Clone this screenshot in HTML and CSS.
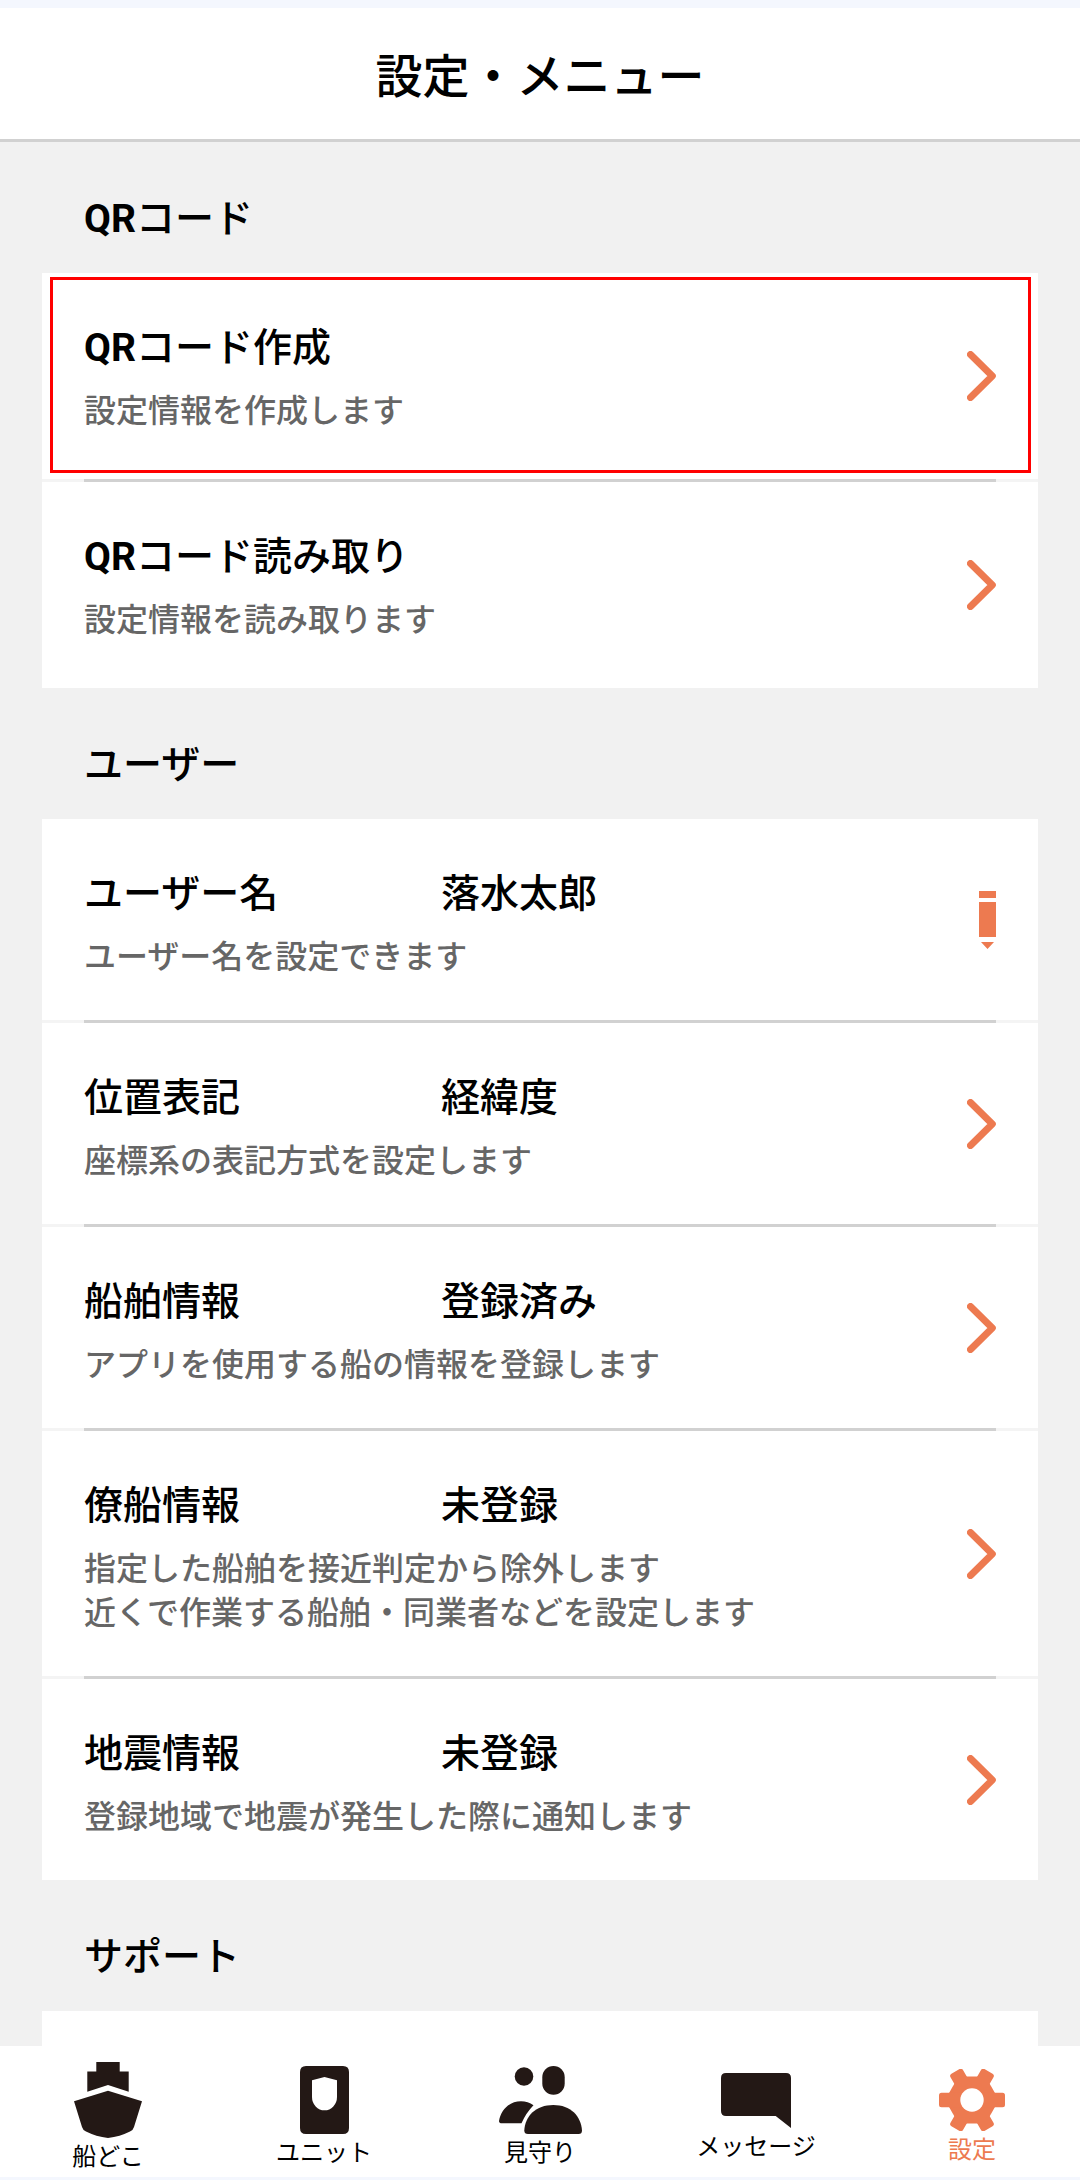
FILE: index.html
```html
<!DOCTYPE html>
<html lang="ja">
<head>
<meta charset="utf-8">
<meta name="viewport" content="width=device-width, initial-scale=1">
<title>設定・メニュー</title>
<link rel="stylesheet" href="styles.css">
</head>
<body>
<svg class="sprite" aria-hidden="true">
  <symbol id="chevron" viewBox="0 0 29 50">
    <path d="M3.5 3.5L25.3 25L3.5 46.5" fill="none" stroke="currentColor" stroke-width="7" stroke-linecap="round" stroke-linejoin="round"/>
  </symbol>
</svg>
<div class="app">
  <header class="header">
    <h1 class="header-title">設定・メニュー</h1>
  </header>

  <main class="main">
    <section class="section">
      <h2 class="section-title"><b>QR</b>コード</h2>
      <ul class="card card-tall">
        <li class="item item-marked">
          <a class="row" href="#qr-create">
            <span class="row-text">
              <span class="row-head"><b>QR</b>コード作成</span>
              <span class="row-desc">設定情報を作成します</span>
            </span>
            <svg class="chevron" aria-hidden="true"><use href="#chevron"/></svg>
          </a>
        </li>
        <li class="item">
          <a class="row" href="#qr-read">
            <span class="row-text">
              <span class="row-head"><b>QR</b>コード読み取り</span>
              <span class="row-desc">設定情報を読み取ります</span>
            </span>
            <svg class="chevron" aria-hidden="true"><use href="#chevron"/></svg>
          </a>
        </li>
      </ul>
    </section>

    <section class="section">
      <h2 class="section-title">ユーザー</h2>
      <ul class="card">
        <li class="item">
          <button class="row" type="button">
            <span class="row-text">
              <span class="row-head"><span class="row-name">ユーザー名</span><span>落水太郎</span></span>
              <span class="row-desc">ユーザー名を設定できます</span>
            </span>
            <svg class="pencil" viewBox="0 0 17 58" aria-hidden="true">
              <path d="M0 0H17V7H0ZM0 11H17V46H0ZM2 51H15L8.500 58Z" fill="currentColor"/>
            </svg>
          </button>
        </li>
        <li class="item">
          <a class="row" href="#position">
            <span class="row-text">
              <span class="row-head"><span class="row-name">位置表記</span><span>経緯度</span></span>
              <span class="row-desc">座標系の表記方式を設定します</span>
            </span>
            <svg class="chevron" aria-hidden="true"><use href="#chevron"/></svg>
          </a>
        </li>
        <li class="item">
          <a class="row" href="#ship">
            <span class="row-text">
              <span class="row-head"><span class="row-name">船舶情報</span><span>登録済み</span></span>
              <span class="row-desc">アプリを使用する船の情報を登録します</span>
            </span>
            <svg class="chevron" aria-hidden="true"><use href="#chevron"/></svg>
          </a>
        </li>
        <li class="item">
          <a class="row" href="#consort">
            <span class="row-text">
              <span class="row-head"><span class="row-name">僚船情報</span><span>未登録</span></span>
              <span class="row-desc">指定した船舶を接近判定から除外します<br>近くで作業する船舶・同業者などを設定します</span>
            </span>
            <svg class="chevron" aria-hidden="true"><use href="#chevron"/></svg>
          </a>
        </li>
        <li class="item">
          <a class="row" href="#earthquake">
            <span class="row-text">
              <span class="row-head"><span class="row-name">地震情報</span><span>未登録</span></span>
              <span class="row-desc">登録地域で地震が発生した際に通知します</span>
            </span>
            <svg class="chevron" aria-hidden="true"><use href="#chevron"/></svg>
          </a>
        </li>
      </ul>
    </section>

    <section class="section section-last">
      <h2 class="section-title">サポート</h2>
      <div class="card card-fill"></div>
    </section>
  </main>

  <nav class="nav">
    <a class="nav-item" href="#map">
      <svg width="68" height="76" viewBox="0 0 68 76" fill="currentColor" aria-hidden="true">
        <path d="M22.300 0H45.700V9.600H54.700V29.700L34 23L13.300 29.700V9.600H22.300Z"/>
        <path d="M34 28.700L68 39.300L60 65Q59 68.500 56 69.500Q46 74.500 34 76Q22 74.500 12 69.500Q9 68.500 8 65L0 39.300Z"/>
      </svg>
      <span class="nav-label">船どこ</span>
    </a>
    <a class="nav-item" href="#unit">
      <svg width="49" height="68" viewBox="0 0 49 68" fill="currentColor" aria-hidden="true">
        <path fill-rule="evenodd" d="M6 0H43Q49 0 49 6V62Q49 68 43 68H6Q0 68 0 62V6Q0 0 6 0ZM24.500 11L12 14.300V31A12.500 13.300 0 0 0 37 31V14.300Z"/>
      </svg>
      <span class="nav-label">ユニット</span>
    </a>
    <a class="nav-item" href="#watch">
      <svg width="83" height="68" viewBox="0 0 83 68" fill="currentColor" aria-hidden="true">
        <circle cx="25" cy="10.500" r="9.300"/>
        <rect x="43.300" y="0" width="22.400" height="28.700" rx="11.200"/>
        <path d="M25.300 64.500C26 50 37 39 54.300 39S82 50 83 64.500Q83 68 79.500 68H29Q25.300 68 25.300 64.500Z"/>
        <path d="M0 55C2 43 11 35.300 22 35.300Q29 35.300 34.500 39.300Q27 47 22.500 57.300H3Q0 57.300 0 55Z"/>
      </svg>
      <span class="nav-label">見守り</span>
    </a>
    <a class="nav-item" href="#message">
      <svg width="70" height="55" viewBox="0 0 70 55" fill="currentColor" aria-hidden="true">
        <path d="M5 0H65Q70 0 70 5V55L54.700 43H5Q0 43 0 38V5Q0 0 5 0Z"/>
      </svg>
      <span class="nav-label">メッセージ</span>
    </a>
    <a class="nav-item nav-item-active" href="#settings" aria-current="page">
      <svg width="66" height="62" viewBox="-33 -31 66 62" fill="currentColor" aria-hidden="true">
        <mask id="hub">
          <rect x="-33" y="-31" width="66" height="62" fill="#fff"/>
          <circle r="11.700" fill="#000"/>
        </mask>
        <g mask="url(#hub)">
          <path d="M27 0L13.500 23.500H-13.500L-27 0L-13.500 -23.500H13.500Z"/>
          <rect x="-33" y="-7.200" width="66" height="14.400" rx="2.500"/>
          <rect x="-33" y="-7.200" width="66" height="14.400" rx="2.500" transform="rotate(60)"/>
          <rect x="-33" y="-7.200" width="66" height="14.400" rx="2.500" transform="rotate(120)"/>
        </g>
      </svg>
      <span class="nav-label">設定</span>
    </a>
  </nav>
</div>
</body>
</html>
```
FILE: styles.css
```css
* {
  box-sizing: border-box;
}

body {
  margin: 0;
  background: #f1f1f1;
  color: #000;
  font-family: Roboto, "Noto Sans CJK JP", sans-serif;
}

b {
  font-weight: 700;
}

.sprite {
  display: none;
}

.app {
  display: flex;
  flex-direction: column;
  min-height: 100vh;
  border-top: 8px solid #f4f7fe;
}

.header {
  padding: 35px 42px 28px;
  border-bottom: 3px solid #d1d1d1;
  background: #fff;
}

.header-title {
  margin: 0;
  font-size: 47px;
  font-weight: 500;
  line-height: 68px;
  text-align: center;
}

.main {
  display: flex;
  flex: 1;
  flex-direction: column;
  padding: 0 42px;
}

.section-title {
  margin: 0;
  padding: 48px 42px 25px;
  font-size: 39px;
  font-weight: 500;
  line-height: 58px;
}

.section-last {
  display: flex;
  flex: 1;
  flex-direction: column;
}

.card {
  margin: 0;
  padding: 0;
  background: #fff;
  list-style: none;
}

.card-fill {
  flex: 1;
  min-height: 35px;
}

.item {
  position: relative;
}

.item + .item::before {
  display: block;
  height: 3px;
  border: solid #f4f4f4;
  border-width: 0 42px;
  background: #d1d1d1;
  content: "";
}

.item-marked::after {
  position: absolute;
  inset: 4px 7px 6px 8px;
  border: 3px solid #f00;
  content: "";
  pointer-events: none;
}

.row {
  display: flex;
  align-items: center;
  justify-content: space-between;
  width: 100%;
  padding: 0 42px;
  border: 0;
  background: none;
  color: inherit;
  font: inherit;
  text-align: left;
  text-decoration: none;
}

.row-text {
  display: grid;
  gap: 12px;
  padding: 46px 0 41px;
}

.card-tall .row-text {
  padding-bottom: 46px;
}

.row-head {
  display: flex;
  font-size: 39px;
  font-weight: 500;
  line-height: 58px;
}

.row-name {
  min-width: 357px;
}

.row-desc {
  color: #666;
  font-size: 32px;
  font-weight: 500;
  line-height: 44px;
}

.chevron,
.pencil {
  flex: none;
  color: #ed7a50;
}

.chevron {
  width: 29px;
  height: 50px;
}

.pencil {
  width: 17px;
  height: 58px;
}

.nav {
  position: sticky;
  bottom: 0;
  display: grid;
  grid-template-columns: repeat(5, 1fr);
  height: 134px;
  padding-top: 16px;
  border-bottom: 3px solid #f4f7fe;
  background: #fff;
}

.nav-item {
  display: flex;
  flex-direction: column;
  align-items: center;
  justify-content: center;
  color: #231815;
  text-decoration: none;
}

.nav-label {
  color: #000;
  font-size: 24px;
  line-height: 39px;
}

.nav-item-active,
.nav-item-active .nav-label {
  color: #ed7a50;
}
```
